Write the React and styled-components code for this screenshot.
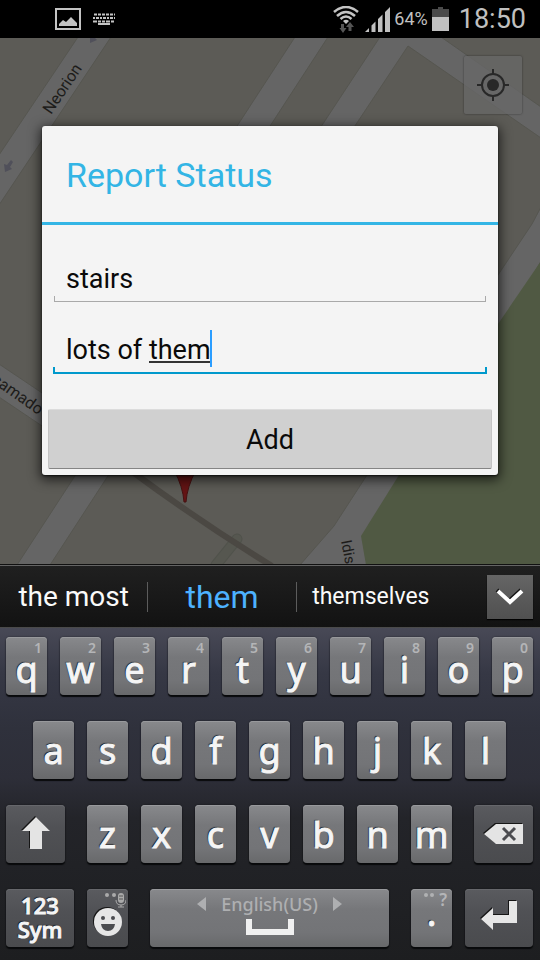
import React from "react";
import styled, { createGlobalStyle } from "styled-components";

const GlobalStyle = createGlobalStyle`
  * { box-sizing: border-box; }
  body { margin: 0; background: #1d1e20; font-family: Roboto, "Noto Sans", sans-serif; }
  button, input { font: inherit; color: inherit; border: 0; padding: 0; margin: 0; background: none; }
  input { outline: 0; }
`;

const Screen = styled.div`
  display: flex;
  flex-direction: column;
  min-height: 100vh;
`;

const StatusBar = styled.header`
  display: flex;
  align-items: center;
  justify-content: space-between;
  height: 38px;
  padding: 0 14px 0 55px;
  background: #000;
  color: #c0c0c0;
`;

const StatusGroup = styled.div`
  display: flex;
  align-items: center;
  gap: ${(p) => p.$gap}px;
`;

const Percent = styled.span`
  font-size: 18px;
  line-height: 36px;
`;

const Clock = styled.time`
  margin-left: 6px;
  font-size: 27px;
  line-height: 38px;
`;

const MapArea = styled.main`
  position: relative;
  flex: 1;
  display: flex;
  flex-direction: column;
  padding: 88px 42px 89px;
  overflow: hidden;
  background: #5c5b56;
`;

const MapDrawing = styled.svg`
  position: absolute;
  inset: 0;
  width: 100%;
  height: 100%;
`;

const LocateButton = styled.button`
  position: absolute;
  top: 18px;
  right: 18px;
  display: grid;
  place-items: center;
  width: 58px;
  height: 58px;
  border-radius: 2px;
  background: rgba(104, 104, 104, 0.75);
  box-shadow: 0 0 2px rgba(0, 0, 0, 0.5);
`;

const Dialog = styled.form`
  position: relative;
  display: flex;
  flex-direction: column;
  border-radius: 3px;
  background: #f4f4f4;
  color: #0a0a0a;
  box-shadow: 0 3px 12px 2px rgba(0, 0, 0, 0.65), 0 1px 2px rgba(0, 0, 0, 0.7);
`;

const DialogTitle = styled.h1`
  margin: 0;
  padding: 2px 24px 0;
  border-bottom: 3px solid #33b5e5;
  color: #33b5e5;
  font-size: 34px;
  font-weight: 400;
  line-height: 94px;
`;

const Fields = styled.div`
  display: flex;
  flex-direction: column;
  padding: 30px 11px 35px;
`;

const Field = styled.div`
  position: relative;
  display: flex;
  flex-direction: column;
  height: ${(p) => (p.$active ? 72 : 47)}px;
  padding: ${(p) => (p.$active ? "25px 0 0" : "1px 1px 0")};
`;

const TextBox = styled.input`
  width: 100%;
  height: 47px;
  padding: 0 12px 0 ${(p) => (p.$active ? 13 : 12)}px;
  font-size: 27px;
  line-height: 47px;
`;

const FieldRule = styled.span`
  position: absolute;
  left: ${(p) => (p.$active ? 0 : 1)}px;
  right: ${(p) => (p.$active ? 0 : 1)}px;
  bottom: 0;
  height: ${(p) => (p.$active ? 7 : 6)}px;
  border: solid ${(p) => (p.$active ? "#0099cc" : "#a9a9a9")};
  border-width: ${(p) => (p.$active ? "0 2px 2px" : "0 1px 1px")};
  pointer-events: none;
`;

const Composing = styled.span`
  position: absolute;
  left: 96px;
  bottom: 11px;
  width: 62px;
  height: 2px;
  background: #333;
`;

const Caret = styled.span`
  position: absolute;
  left: 157px;
  bottom: 7px;
  width: 2px;
  height: 37px;
  background: #2a9dff;
`;

const AddButton = styled.button`
  height: 60px;
  margin: 0 6px 6px;
  padding-top: 2px;
  border: 1px solid #c4c4c4;
  border-top-color: #dcdcdc;
  border-bottom-color: #858585;
  border-radius: 2px;
  background: #d0d0d0;
  font-size: 27px;
  line-height: 56px;
`;

const Suggestions = styled.div`
  display: flex;
  align-items: center;
  height: 64px;
  padding-right: 7px;
  border-top: 1px solid #111;
  background: linear-gradient(#202020, #121212);
  box-shadow: inset 0 1px #646464, inset 0 -1px #4a4a4a;
`;

const Suggestion = styled.button`
  flex: ${(p) => p.$grow} 1 0;
  height: 30px;
  border-right: ${(p) => (p.$last ? "0" : "1px solid #5c5c5c")};
  color: ${(p) => (p.$best ? "#4db2ff" : "#fafafa")};
  font-size: ${(p) => p.$size}px;
  line-height: 30px;
  white-space: nowrap;
`;

const MoreButton = styled.button`
  display: grid;
  place-items: center;
  width: 46px;
  height: 44px;
  margin-left: 42px;
  background: linear-gradient(#656565, #505050);
  box-shadow: 0 1px 1px #000;
`;

const Keyboard = styled.section`
  display: flex;
  flex-direction: column;
  gap: 26px;
  padding: 9px 7px 13px 6px;
  background: linear-gradient(#484956 0, #363845 45px, #2f313c 100px, #2d2e38 150px, #232429 190px, #1d1e20 332px);
  font-family: "Noto Sans", "Open Sans", sans-serif;
`;

const KeyRow = styled.div`
  display: flex;
  gap: 13px;
  padding: 0 ${(p) => p.$inset || 0}px;
`;

const Key = styled.button`
  position: relative;
  flex: ${(p) => p.$units || 41} 1 0;
  min-width: 0;
  display: flex;
  flex-direction: column;
  align-items: center;
  justify-content: center;
  height: 58px;
  padding-bottom: ${(p) => p.$lift || 0}px;
  margin-left: ${(p) => (p.$before ? 9 : 0)}px;
  margin-right: ${(p) => (p.$after ? 9 : 0)}px;
  border-radius: 4px;
  color: #f5f5f5;
  background: ${(p) =>
    p.$dark
      ? "linear-gradient(#5a5b5f, #505155 40%, #4a4b4e)"
      : "linear-gradient(#88898c, #76777a 35%, #737477 75%, #68696b)"};
  box-shadow: 0 2px 1px #08090b, 0 0 2px rgba(0, 0, 0, 0.5), inset 0 1px ${(p) => (p.$dark ? "#66676b" : "#98999c")};
`;

const Letter = styled.span`
  font-size: 36px;
  line-height: 30px;
  padding-top: ${(p) => (p.$low ? 8 : 2)}px;
  -webkit-text-stroke: 1px #f5f5f5;
  text-shadow: -1px -1px 1px rgba(0, 0, 0, 0.85);
`;

const Hint = styled.span`
  position: absolute;
  top: 5px;
  right: 5px;
  color: #b4b5b7;
  font-size: ${(p) => p.$size || 14}px;
  font-weight: 600;
  line-height: 12px;
`;

const SymLabel = styled.span`
  font-size: 22px;
  font-weight: 500;
  line-height: 24px;
  -webkit-text-stroke: 1px #f5f5f5;
  text-shadow: -1px -1px 1px rgba(0, 0, 0, 0.85);
`;

const Language = styled.span`
  display: flex;
  align-items: center;
  gap: 15px;
  color: #aeafb1;
  font-size: 18px;
  font-weight: 500;
  line-height: 26px;
`;

const HintDrawing = styled.svg`
  position: absolute;
  top: 3px;
  right: ${(p) => p.$right || 2}px;
`;

const Drawing = styled.svg`
  display: block;
  flex: none;
  margin-top: ${(p) => p.$top || 0}px;
  filter: ${(p) => (p.$shade ? "drop-shadow(-1px -1px 0 #151515)" : "none")};
`;

function CityMap() {
  return (
    <MapDrawing viewBox="0 38 540 526" preserveAspectRatio="xMidYMin slice" aria-hidden="true">
      <rect y="38" width="540" height="526" fill="#5c5b56" />
      <g fill="#656565" stroke="#565650" strokeWidth="1">
        <path d="M78 37H111L-1 205V155Z" />
        <path d="M295 37H328L233 183H200Z" />
        <path d="M380 37H441L541 107V138L408 46L323 174H290Z" />
        <path d="M541 207L532 224L498 275L367 475L334 526L300 565H366L541 261Z" />
        <path d="M-1 364L60 405V438L-1 397Z" />
        <path d="M82 465H115L50 565H17Z" />
      </g>
      <path d="M541 261L498 324L399 475L361 536L366 565H541Z" fill="#505943" />
      <path d="M237 539L216 565" stroke="#50524b" strokeWidth="11" strokeLinecap="round" />
      <path d="M237 539L216 565" stroke="#565750" strokeWidth="9" strokeLinecap="round" />
      <path d="M130 470Q200 522 272 566" fill="none" stroke="#4b4843" strokeWidth="6" />
      <path d="M174 470H196Q187 487 186 502H184Q183 487 174 470Z" fill="#641414" stroke="#451212" />
      <path d="M90 38V43L97 40L95 38Z" fill="#50505a" />
      <path d="M4 164L5 172L12 169L10 167L13 162L11 160L7 165Z" fill="#50505a" />
      <g fill="#1d1c1a" fontFamily="Roboto, sans-serif">
        <text transform="translate(51 115) rotate(-56)" fontSize="16">Neorion</text>
        <text transform="translate(-9 382) rotate(35)" fontSize="16">samado</text>
        <text transform="translate(341 541) rotate(79)" fontSize="15">Idis</text>
      </g>
    </MapDrawing>
  );
}

const PictureIcon = () => (
  <Drawing width="26" height="22" viewBox="0 0 26 22">
    <rect x="1" y="1" width="24" height="20" fill="none" stroke="#c4c4c4" strokeWidth="2" />
    <path d="M4 18V16L8 12L11 14L16 9L22 15V18Z" fill="#c4c4c4" />
  </Drawing>
);

const KeyboardIcon = () => (
  <Drawing width="22" height="12" viewBox="0 0 22 12" stroke="#c4c4c4" strokeWidth="2">
    <path d="M1 1.5H22" strokeDasharray="3 1" />
    <path d="M0 5H22" strokeDasharray="2 1 3 1" />
    <path d="M0 8.5H22" strokeDasharray="4 1 3 1 3 1" />
    <path d="M5 11H17" />
  </Drawing>
);

const WifiIcon = () => (
  <Drawing width="28" height="27" viewBox="0 0 28 27" fill="none">
    <g stroke="#c4c4c4" strokeWidth="2.6">
      <path d="M1 6Q13 -4 25 6" />
      <path d="M4 10Q13 2 22 10" />
      <path d="M7.500 13Q13 8 18.500 13" />
    </g>
    <path d="M10 15Q13 12.500 16 15L13 18Z" fill="#c4c4c4" />
    <path d="M8 18H11V22H13.500L10 27L6.500 22H8Z M15.500 25V21H13L17 16L21 21H18.500V25Z" fill="#555" />
  </Drawing>
);

const SignalIcon = () => (
  <Drawing width="25" height="25" viewBox="0 0 25 25" fill="#c0c0c0">
    <path d="M0 25L4 21V25Z M6.500 18.500L10.500 14.500V25H6.500Z M13 12L17.500 7.500V25H13Z M20 5L25 0V25H20Z" />
  </Drawing>
);

const BatteryIcon = () => (
  <Drawing width="17" height="24" viewBox="0 0 17 24">
    <path d="M0 2H6V0H11V2H17V10H0Z" fill="#4a4a4a" />
    <path d="M0 10H17V24H0Z" fill="#c0c0c0" />
  </Drawing>
);

const TargetIcon = () => (
  <Drawing width="32" height="32" viewBox="0 0 32 32" fill="none" stroke="#282828" strokeWidth="2">
    <circle cx="16" cy="16" r="11" />
    <circle cx="16" cy="16" r="6" fill="#282828" stroke="none" />
    <path d="M16 0V5M16 27V32M0 16H5M27 16H32" />
  </Drawing>
);

const ChevronIcon = () => (
  <Drawing $shade width="28" height="18" viewBox="0 0 28 18" fill="none">
    <path d="M2 3L14 14L26 3" stroke="#fff" strokeWidth="4" />
  </Drawing>
);

const ShiftIcon = () => (
  <Drawing $shade $top={-2} width="30" height="34" viewBox="0 0 30 34">
    <path d="M15 1L29 15H21V33H9V15H1Z" fill="#e4e4e4" />
  </Drawing>
);

const DeleteIcon = () => (
  <Drawing $shade width="40" height="22" viewBox="0 0 40 22">
    <path d="M0 11L12 1H39V21H12Z" fill="#e4e4e4" />
    <path d="M19 5L31 17M31 5L19 17" stroke="#4b4c50" strokeWidth="3" />
  </Drawing>
);

const SmileIcon = () => (
  <Drawing $shade $top={8} width="28" height="28" viewBox="0 0 28 28">
    <circle cx="14" cy="14" r="14" fill="#e6e6e6" />
    <path d="M7 16H21Q20 23 14 23Q8 23 7 16Z" fill="#4b4c50" />
    <circle cx="9" cy="10" r="2" fill="#4b4c50" />
    <circle cx="19" cy="10" r="2" fill="#4b4c50" />
  </Drawing>
);

const MicHint = () => (
  <HintDrawing width="22" height="16" viewBox="0 0 22 16" fill="#aaa">
    <circle cx="3" cy="3" r="2" />
    <circle cx="10" cy="3" r="2" />
    <rect x="14" y="1" width="6" height="10" rx="3" />
    <path d="M12 8Q12 13 17 13Q22 13 22 8M17 13V15M14 15H20" fill="none" stroke="#aaa" />
    <path d="M15 4H19M15 7H19" stroke="#555" />
  </HintDrawing>
);

const Triangle = ({ d }) => (
  <Drawing width="9" height="14" viewBox="0 0 9 14">
    <path d={d} fill="#aeafb1" />
  </Drawing>
);

const SpaceIcon = () => (
  <Drawing $top={2} width="48" height="17" viewBox="0 0 48 17">
    <path d="M3 0V13H45V0" fill="none" stroke="#f0f0f0" strokeWidth="6" />
  </Drawing>
);

const EnterIcon = () => (
  <Drawing $shade width="36" height="31" viewBox="0 0 36 31">
    <path d="M0 19L12 8V15H28V1H36V23H12V30Z" fill="#e6e6e6" />
  </Drawing>
);

const PeriodHint = () => (
  <HintDrawing $right={17} width="12" height="6" viewBox="0 0 12 6" fill="#b0b1b3">
    <circle cx="3" cy="3" r="2" />
    <circle cx="9" cy="3" r="2" />
  </HintDrawing>
);

export default function App() {
  const [status, setStatus] = React.useState("stairs");
  const [details, setDetails] = React.useState("lots of them");
  return (
    <>
      <GlobalStyle />
      <Screen>
        <StatusBar>
          <StatusGroup $gap={12}>
            <PictureIcon />
            <KeyboardIcon />
          </StatusGroup>
          <StatusGroup $gap={4}>
            <WifiIcon />
            <SignalIcon />
            <Percent>64%</Percent>
            <BatteryIcon />
            <Clock>18:50</Clock>
          </StatusGroup>
        </StatusBar>

        <MapArea>
          <CityMap />
          <LocateButton type="button" aria-label="My location">
            <TargetIcon />
          </LocateButton>
          <Dialog onSubmit={(e) => e.preventDefault()}>
            <DialogTitle>Report Status</DialogTitle>
            <Fields>
              <Field>
                <TextBox aria-label="Status" value={status} onChange={(e) => setStatus(e.target.value)} />
                <FieldRule />
              </Field>
              <Field $active>
                <TextBox $active aria-label="Details" value={details} onChange={(e) => setDetails(e.target.value)} />
                <Composing />
                <Caret />
                <FieldRule $active />
              </Field>
            </Fields>
            <AddButton type="submit">Add</AddButton>
          </Dialog>
        </MapArea>

        <Suggestions>
          <Suggestion $grow={148} $size={28}>the most</Suggestion>
          <Suggestion $grow={148} $size={32} $best>them</Suggestion>
          <Suggestion $grow={149} $size={23} $last>themselves</Suggestion>
          <MoreButton type="button" aria-label="More suggestions">
            <ChevronIcon />
          </MoreButton>
        </Suggestions>

        <Keyboard aria-label="Keyboard">
          <KeyRow>
            {[..."qwertyuiop"].map((c, i) => (
              <Key key={c}>
                <Hint>{(i + 1) % 10}</Hint>
                <Letter $low>{c}</Letter>
              </Key>
            ))}
          </KeyRow>
          <KeyRow $inset={27}>
            {[..."asdfghjkl"].map((c) => (
              <Key key={c}>
                <Letter>{c}</Letter>
              </Key>
            ))}
          </KeyRow>
          <KeyRow>
            <Key $dark $units={59} aria-label="Shift"><ShiftIcon /></Key>
            {[..."zxcvbnm"].map((c) => (
              <Key key={c} $before={c === "z"} $after={c === "m"}>
                <Letter>{c}</Letter>
              </Key>
            ))}
            <Key $dark $units={59} aria-label="Delete"><DeleteIcon /></Key>
          </KeyRow>
          <KeyRow>
            <Key $dark $units={68} $lift={2}>
              <SymLabel>123</SymLabel>
              <SymLabel>Sym</SymLabel>
            </Key>
            <Key $dark aria-label="Emoji">
              <MicHint />
              <SmileIcon />
            </Key>
            <Key $units={239} $before $after $lift={10}>
              <Language>
                <Triangle d="M9 0V14L0 7Z" />
                English(US)
                <Triangle d="M0 0V14L9 7Z" />
              </Language>
              <SpaceIcon />
            </Key>
            <Key $lift={12}>
              <PeriodHint />
              <Hint $size={17}>?</Hint>
              <Letter>.</Letter>
            </Key>
            <Key $dark $units={68} $lift={6} aria-label="Enter"><EnterIcon /></Key>
          </KeyRow>
        </Keyboard>
      </Screen>
    </>
  );
}
